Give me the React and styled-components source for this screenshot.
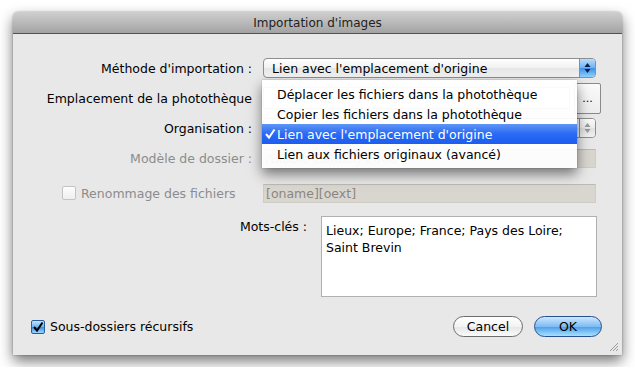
import React from 'react'
import styled, { createGlobalStyle, css } from 'styled-components'

const GlobalStyle = createGlobalStyle`
  html, body {
    margin: 0;
    padding: 0;
    background: #fff;
  }
  body {
    font-family: 'DejaVu Sans', 'Liberation Sans', sans-serif;
    font-size: 12.5px;
    color: #000;
  }
`

const Page = styled.div`
  padding: 12px 13px;
`

const Window = styled.div`
  position: relative;
  width: 609px;
  height: 343px;
  display: flex;
  flex-direction: column;
  background: #e8e8e8;
  border-radius: 5px 5px 0 0;
  box-shadow: 0 6px 14px rgba(0, 0, 0, 0.55), 0 0 2px rgba(0, 0, 0, 0.35);
`

const TitleBar = styled.div`
  height: 21px;
  flex: none;
  display: flex;
  align-items: center;
  justify-content: center;
  border-radius: 5px 5px 0 0;
  background: linear-gradient(#cfcfcf, #a3a3a3);
  border-bottom: 1px solid #525252;
  font-size: 12px;
  color: #222;
`

const Body = styled.div`
  flex: 1;
  display: flex;
  flex-direction: column;
  padding: 19px 0 18px 0;
`

const Form = styled.div`
  display: grid;
  grid-template-columns: 239px 333px;
  grid-template-rows: 30px 30px 30px 30px 40px;
  column-gap: 11px;
  align-items: center;
`

const Label = styled.div`
  text-align: right;
  white-space: nowrap;
  color: ${(p) => (p.$disabled ? '#8c8c8c' : '#000')};
`

const PopupWrap = styled.div`
  position: relative;
`

const Popup = styled.div`
  height: 20px;
  box-sizing: border-box;
  display: flex;
  align-items: center;
  padding-left: 8px;
  border: 1px solid #8e8e8e;
  border-radius: 4px;
  background: linear-gradient(#ffffff, #f1f1f1 50%, #e6e6e6 51%, #f4f4f4);
  overflow: hidden;
  white-space: nowrap;
`

const PopupText = styled.span`
  flex: 1;
`

const Stepper = styled.div`
  width: 15px;
  height: 100%;
  display: flex;
  align-items: center;
  justify-content: center;
  border-left: 1px solid #8e8e8e;
  ${(p) =>
    p.$active
      ? css`
          background: linear-gradient(#b9dcfb, #6fb1f2 50%, #3f8ee6 51%, #8fd0ff);
        `
      : css`
          background: linear-gradient(#fafafa, #ececec 50%, #e0e0e0 51%, #f2f2f2);
        `}
`

const Menu = styled.ul`
  position: absolute;
  left: -1px;
  top: 22px;
  width: 315px;
  margin: 0;
  padding: 4px 0;
  list-style: none;
  background: rgba(255, 255, 255, 0.93);
  box-shadow: 0 6px 12px rgba(0, 0, 0, 0.5), 0 0 1px rgba(0, 0, 0, 0.4);
  z-index: 2;
`

const MenuItem = styled.li`
  position: relative;
  height: 20px;
  display: flex;
  align-items: center;
  padding-left: 15px;
  white-space: nowrap;
  ${(p) =>
    p.$selected &&
    css`
      color: #fff;
      background: linear-gradient(#5e95f6, #2a6af3 50%, #1c5cf1);
    `}
`

const CheckMark = styled.span`
  position: absolute;
  left: 2px;
  top: 4px;
  line-height: 0;
`

const PathRow = styled.div`
  height: 30px;
  display: flex;
  align-items: center;
  gap: 4px;
`

const PathField = styled.div`
  flex: 1;
  height: 20px;
  display: flex;
  align-items: center;
  padding-left: 14px;
  background: #fff;
  border: 1px solid #a5a5a5;
  color: #aaa;
`

const BrowseButton = styled.div`
  width: 25px;
  height: 29px;
  margin-right: -5px;
  display: flex;
  align-items: center;
  justify-content: center;
  border: 1px solid #8a8a8a;
  border-radius: 2px;
  background: linear-gradient(#fbfbfb, #ececec);
  font-size: 11px;
`

const Field = styled.div`
  height: 19px;
  box-sizing: border-box;
  display: flex;
  align-items: center;
  padding-left: 2px;
  border: 1px solid #cfccc6;
  border-top-color: #bdb9b3;
  background: ${(p) => (p.$disabled ? '#d9d5cf' : '#fff')};
  color: ${(p) => (p.$disabled ? '#8a8782' : '#000')};
  white-space: nowrap;
`

const CheckLabel = styled.label`
  display: flex;
  align-items: center;
  gap: 5px;
  white-space: nowrap;
  margin-left: ${(p) => p.$indent || 0}px;
  color: ${(p) => (p.$disabled ? '#8c8c8c' : '#000')};
`

const Box = styled.span`
  width: 14px;
  height: 14px;
  box-sizing: border-box;
  display: inline-flex;
  align-items: center;
  justify-content: center;
  border-radius: 2px;
  ${(p) =>
    p.$checked
      ? css`
          border: 1px solid #2a5d9c;
          background: linear-gradient(#c5e3fd, #6cb3f2 50%, #3c8ce3 51%, #9ad6ff);
        `
      : css`
          border: 1px solid #c3c3c3;
          background: linear-gradient(#fdfdfd, #efefef);
        `}
`

const KeywordsRow = styled.div`
  margin-top: 3px;
  display: flex;
  justify-content: flex-end;
  align-items: flex-start;
  gap: 14px;
  padding-right: 25px;
`

const KeywordsLabel = styled.div`
  padding-top: 3px;
`

const TextArea = styled.div`
  width: 276px;
  height: 81px;
  box-sizing: border-box;
  padding: 5px 4px;
  background: #fff;
  border: 1px solid #b0b0b0;
  line-height: 17px;
`

const Footer = styled.div`
  margin-top: auto;
  display: flex;
  align-items: center;
  justify-content: space-between;
  padding: 0 20px 0 18px;
`

const Buttons = styled.div`
  display: flex;
  gap: 11px;
`

const PushButton = styled.button`
  width: ${(p) => p.$w}px;
  height: 21px;
  border-radius: 11px;
  font: inherit;
  padding: 0;
  color: #000;
  ${(p) =>
    p.$default
      ? css`
          border: 1px solid #27508f;
          background: linear-gradient(#cde7fd, #7ebcf3 50%, #4c9ce8 51%, #a8e1ff);
        `
      : css`
          border: 1px solid #6d6d6d;
          background: linear-gradient(#ffffff, #f3f3f3 50%, #e6e6e6 51%, #fafafa);
        `}
`

const Grip = styled.svg`
  position: absolute;
  right: 3px;
  bottom: 3px;
`

const Arrows = ({ color }) => (
  <svg width="7" height="12" viewBox="0 0 7 12">
    <path d="M3.5 1 L6.5 5 L0.5 5 Z" fill={color} />
    <path d="M3.5 11 L6.5 7 L0.5 7 Z" fill={color} />
  </svg>
)

const Tick = ({ color = '#000' }) => (
  <svg width="12" height="12" viewBox="0 0 12 12">
    <path d="M2 6 L5 9.5 L10.5 1.5" stroke={color} strokeWidth="2" fill="none" />
  </svg>
)

const methods = [
  'Déplacer les fichiers dans la photothèque',
  'Copier les fichiers dans la photothèque',
  "Lien avec l'emplacement d'origine",
  'Lien aux fichiers originaux (avancé)',
]

export default function App() {
  return (
    <Page>
      <GlobalStyle />
      <Window>
        <TitleBar>Importation d'images</TitleBar>
        <Body>
          <Form>
            <Label>Méthode d'importation :</Label>
            <PopupWrap>
              <Popup>
                <PopupText>Lien avec l'emplacement d'origine</PopupText>
                <Stepper $active>
                  <Arrows color="#0a1f4a" />
                </Stepper>
              </Popup>
              <Menu>
                {methods.map((m, i) => (
                  <MenuItem key={m} $selected={i === 2}>
                    {i === 2 && (
                      <CheckMark>
                        <Tick color="#fff" />
                      </CheckMark>
                    )}
                    {m}
                  </MenuItem>
                ))}
              </Menu>
            </PopupWrap>

            <Label>Emplacement de la photothèque</Label>
            <PathRow>
              <PathField>Importation d'images</PathField>
              <BrowseButton>...</BrowseButton>
            </PathRow>

            <Label>Organisation :</Label>
            <Popup>
              <PopupText />
              <Stepper>
                <Arrows color="#9a9a9a" />
              </Stepper>
            </Popup>

            <Label $disabled>Modèle de dossier :</Label>
            <Field $disabled>/Bibble Catalog 2008</Field>

            <CheckLabel $disabled $indent={49}>
              <Box />
              Renommage des fichiers
            </CheckLabel>
            <Field $disabled>[oname][oext]</Field>
          </Form>

          <KeywordsRow>
            <KeywordsLabel>Mots-clés :</KeywordsLabel>
            <TextArea>
              Lieux; Europe; France; Pays des Loire;
              <br />
              Saint Brevin
            </TextArea>
          </KeywordsRow>

          <Footer>
            <CheckLabel>
              <Box $checked>
                <Tick />
              </Box>
              Sous-dossiers récursifs
            </CheckLabel>
            <Buttons>
              <PushButton $w={70}>Cancel</PushButton>
              <PushButton $w={68} $default>
                OK
              </PushButton>
            </Buttons>
          </Footer>
        </Body>
        <Grip width="10" height="10" viewBox="0 0 10 10">
          <path d="M9 1 L1 9 M9 4 L4 9 M9 7 L7 9" stroke="#9a9a9a" strokeWidth="1" />
        </Grip>
      </Window>
    </Page>
  )
}
